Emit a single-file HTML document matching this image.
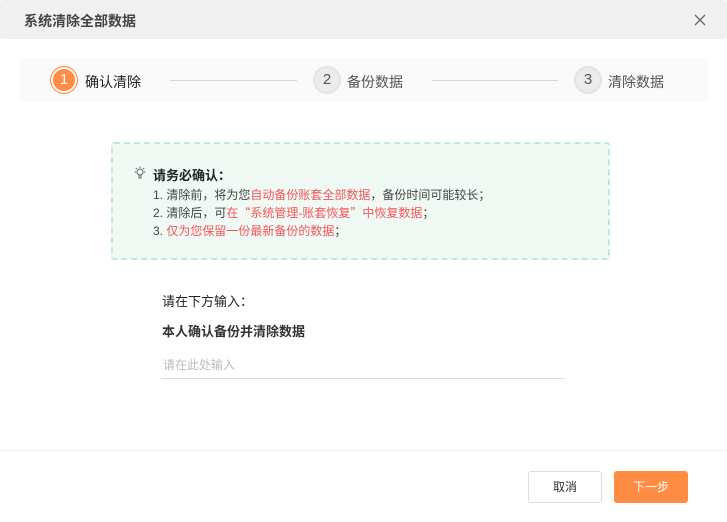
<!DOCTYPE html>
<html><head><meta charset="utf-8"><style>
*{margin:0;padding:0;box-sizing:border-box}
body{width:727px;height:522px;background:#fff;font-family:"Liberation Sans","Noto Sans CJK SC",sans-serif;position:relative;overflow:hidden;color:#333}
.a{position:absolute;white-space:nowrap}
.hd{left:0;top:0;width:727px;height:39px;background:#f0f0f0;border-radius:3px}
.steps{left:20px;top:58px;width:688px;height:43px;background:#fafafa}
.c{position:absolute;width:28px;height:28px;border-radius:50%;border:2px solid #e3e3e3;background:#ececec;color:#555;font-size:15px;line-height:24px;text-align:center}
.ln{position:absolute;height:1px;background:#d6d6d6;top:80px}
.st{font-size:14px;top:72px;color:#555}
.box{left:111px;top:142px;width:499px;height:118px;border:2px dashed #bfe9d2;background:#f0f9f4;border-radius:3px}
.t{font-size:12px;color:#444}
.r{color:#f2565a}
</style></head><body>
<div class="a hd"></div>
<div class="a" style="left:24px;top:11px;font-size:14px;color:#444;font-weight:bold">系统清除全部数据</div>
<svg class="a" style="left:694px;top:14px" width="12" height="12" viewBox="0 0 12 12" stroke="#666" stroke-width="1.3"><path d="M1 1L11 11M11 1L1 11"/></svg>
<div class="a steps"></div>
<div class="c" style="left:50px;top:66px;background:#ff8c42;border:1.5px solid #ff8c42;box-shadow:0 0 0 2px #fff inset;color:#fff;line-height:25px">1</div>
<div class="a st" style="left:85px;color:#222">确认清除</div>
<div class="ln" style="left:170px;width:127px"></div>
<div class="c" style="left:313px;top:66px">2</div>
<div class="a st" style="left:347px">备份数据</div>
<div class="ln" style="left:432px;width:126px"></div>
<div class="c" style="left:574px;top:66px">3</div>
<div class="a st" style="left:608px">清除数据</div>
<div class="a box"></div>
<svg class="a" style="left:133px;top:166px" width="14" height="14" viewBox="0 0 14 14" fill="none" stroke="#666" stroke-width="1"><circle cx="7" cy="6" r="3"/><path d="M6 9v3h2V9M7 0.5v1.5M1.5 6H3M11 6h1.5M2.8 2l1 1M11.2 2l-1 1"/></svg>
<div class="a" style="left:153px;top:165px;font-size:13px;color:#222;font-weight:bold">请务必确认：</div>
<div class="a t" style="left:153px;top:186px">1. 清除前，将为您<span class="r">自动备份账套全部数据</span>，备份时间可能较长；</div>
<div class="a t" style="left:153px;top:204px">2. 清除后，可<span class="r">在<span style="font-family:'Noto Sans CJK SC'">“</span>系统管理-账套恢复<span style="font-family:'Noto Sans CJK SC'">”</span>中恢复数据</span>；</div>
<div class="a t" style="left:153px;top:222px">3. <span class="r">仅为您保留一份最新备份的数据</span>；</div>
<div class="a" style="left:162px;top:291px;font-size:13px;color:#222">请在下方输入：</div>
<div class="a" style="left:162px;top:321px;font-size:13px;color:#333;font-weight:bold">本人确认备份并清除数据</div>
<div class="a" style="left:163px;top:356px;font-size:12px;color:#bbb">请在此处输入</div>
<div class="a" style="left:161px;top:378px;width:404px;height:1px;background:#ddd"></div>
<div class="a" style="left:0;top:450px;width:727px;height:1px;background:#eee"></div>
<div class="a" style="left:528px;top:471px;width:74px;height:32px;border:1px solid #ddd;border-radius:3px;font-size:12px;line-height:30px;text-align:center;color:#333">取消</div>
<div class="a" style="left:614px;top:471px;width:74px;height:32px;background:#ff8c42;border-radius:3px;font-size:12px;line-height:32px;text-align:center;color:#fff">下一步</div>
</body></html>
